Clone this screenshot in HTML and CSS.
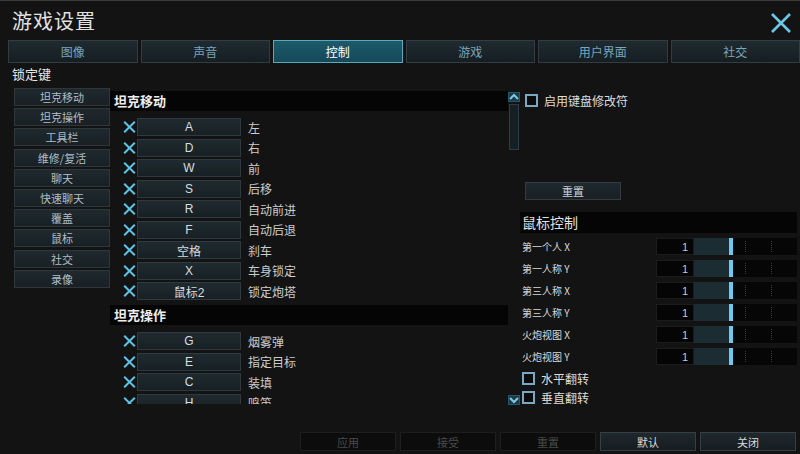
FILE: index.html
```html
<!DOCTYPE html>
<html lang="zh-CN">
<head>
    <meta charset="UTF-8">
    <title>游戏设置</title>
    <link rel="stylesheet" href="styles.css">
</head>
<body>
    <div class="window">
        <header class="titlebar">
            <h1 class="title">游戏设置</h1>
            <svg class="close-icon" width="22" height="22" viewBox="0 0 22 22">
                <path d="M2 2 L20 20 M20 2 L2 20" stroke="#6cc6e6" stroke-width="2.6" fill="none"/>
            </svg>
        </header>

        <nav class="tabs">
            <div class="tab">图像</div>
            <div class="tab">声音</div>
            <div class="tab active">控制</div>
            <div class="tab">游戏</div>
            <div class="tab">用户界面</div>
            <div class="tab">社交</div>
        </nav>

        <div class="section-label">锁定键</div>

        <div class="content">
            <div class="categories">
                <div class="cat-btn">坦克移动</div>
                <div class="cat-btn">坦克操作</div>
                <div class="cat-btn">工具栏</div>
                <div class="cat-btn">维修/复活</div>
                <div class="cat-btn">聊天</div>
                <div class="cat-btn">快速聊天</div>
                <div class="cat-btn">覆盖</div>
                <div class="cat-btn">鼠标</div>
                <div class="cat-btn">社交</div>
                <div class="cat-btn">录像</div>
            </div>

            <div class="binds">
                <div class="group-head">坦克移动</div>
                <div class="bind-list">
                    <div class="bind"><span class="unbind"></span><span class="key">A</span><span class="action">左</span></div>
                    <div class="bind"><span class="unbind"></span><span class="key">D</span><span class="action">右</span></div>
                    <div class="bind"><span class="unbind"></span><span class="key">W</span><span class="action">前</span></div>
                    <div class="bind"><span class="unbind"></span><span class="key">S</span><span class="action">后移</span></div>
                    <div class="bind"><span class="unbind"></span><span class="key">R</span><span class="action">自动前进</span></div>
                    <div class="bind"><span class="unbind"></span><span class="key">F</span><span class="action">自动后退</span></div>
                    <div class="bind"><span class="unbind"></span><span class="key">空格</span><span class="action">刹车</span></div>
                    <div class="bind"><span class="unbind"></span><span class="key">X</span><span class="action">车身锁定</span></div>
                    <div class="bind"><span class="unbind"></span><span class="key">鼠标2</span><span class="action">锁定炮塔</span></div>
                </div>
                <div class="group-head">坦克操作</div>
                <div class="bind-list">
                    <div class="bind"><span class="unbind"></span><span class="key">G</span><span class="action">烟雾弹</span></div>
                    <div class="bind"><span class="unbind"></span><span class="key">E</span><span class="action">指定目标</span></div>
                    <div class="bind"><span class="unbind"></span><span class="key">C</span><span class="action">装填</span></div>
                    <div class="bind"><span class="unbind"></span><span class="key">H</span><span class="action">鸣笛</span></div>
                </div>
            </div>

            <div class="scrollbar">
                <div class="scroll-btn">
                    <svg width="10" height="8" viewBox="0 0 10 8"><path d="M1 6 L5 2 L9 6" stroke="#7cc8e6" stroke-width="2" fill="none"/></svg>
                </div>
                <div class="scroll-thumb"></div>
                <div class="scroll-btn bottom">
                    <svg width="10" height="8" viewBox="0 0 10 8"><path d="M1 2 L5 6 L9 2" stroke="#7cc8e6" stroke-width="2" fill="none"/></svg>
                </div>
            </div>

            <div class="side">
                <label class="check-row">
                    <span class="checkbox"></span>启用键盘修改符
                </label>
                <div class="reset-btn">重置</div>

                <div class="mouse-head">鼠标控制</div>
                <div class="sens-list">
                    <div class="sens-row">
                        <span class="sens-label">第一个人 X</span>
                        <span class="sens-value">1</span>
                        <span class="slider"><span class="fill"></span><span class="handle"></span><span class="tick"></span><span class="tick"></span></span>
                    </div>
                    <div class="sens-row">
                        <span class="sens-label">第一人称 Y</span>
                        <span class="sens-value">1</span>
                        <span class="slider"><span class="fill"></span><span class="handle"></span><span class="tick"></span><span class="tick"></span></span>
                    </div>
                    <div class="sens-row">
                        <span class="sens-label">第三人称 X</span>
                        <span class="sens-value">1</span>
                        <span class="slider"><span class="fill"></span><span class="handle"></span><span class="tick"></span><span class="tick"></span></span>
                    </div>
                    <div class="sens-row">
                        <span class="sens-label">第三人称 Y</span>
                        <span class="sens-value">1</span>
                        <span class="slider"><span class="fill"></span><span class="handle"></span><span class="tick"></span><span class="tick"></span></span>
                    </div>
                    <div class="sens-row">
                        <span class="sens-label">火炮视图 X</span>
                        <span class="sens-value">1</span>
                        <span class="slider"><span class="fill"></span><span class="handle"></span><span class="tick"></span><span class="tick"></span></span>
                    </div>
                    <div class="sens-row">
                        <span class="sens-label">火炮视图 Y</span>
                        <span class="sens-value">1</span>
                        <span class="slider"><span class="fill"></span><span class="handle"></span><span class="tick"></span><span class="tick"></span></span>
                    </div>
                </div>

                <div class="toggles">
                    <label class="check-row"><span class="checkbox"></span>水平翻转</label>
                    <label class="check-row"><span class="checkbox"></span>垂直翻转</label>
                </div>
            </div>
        </div>

        <footer class="footer">
            <div class="foot-btn disabled">应用</div>
            <div class="foot-btn disabled">接受</div>
            <div class="foot-btn disabled">重置</div>
            <div class="foot-btn">默认</div>
            <div class="foot-btn">关闭</div>
        </footer>
    </div>
</body>
</html>
```

FILE: styles.css
```css
* {
    box-sizing: border-box;
}

body {
    margin: 0;
    background-color: #0a0a0a;
    font-family: "Noto Sans CJK SC", "Liberation Sans", sans-serif;
    color: #d8d8d8;
}

.window {
    width: 800px;
    height: 454px;
    background-color: #131313;
    border-top: 1px solid #3a3a3a;
    overflow: hidden;
}

/* Title + close */
.titlebar {
    height: 39px;
    display: flex;
    align-items: center;
    justify-content: space-between;
    padding: 0 8px 0 12px;
}

.title {
    margin: 0;
    font-size: 20px;
    font-weight: normal;
    color: #e2e2e2;
    letter-spacing: 1px;
}

.close-icon {
    margin-top: 4px;
}

/* Tabs */
.tabs {
    display: grid;
    grid-template-columns: repeat(6, 1fr);
    gap: 3px;
    height: 23px;
    padding-left: 8px;
}

.tab {
    display: flex;
    align-items: center;
    justify-content: center;
    font-size: 12px;
    color: #7aa6ba;
    background: linear-gradient(#1f2a30, #161e22);
    border: 1px solid #323c42;
}

.tab.active {
    color: #ffffff;
    background: linear-gradient(#1d5a6a, #15495a);
    border-color: #5aa8bc;
}

.section-label {
    height: 22px;
    line-height: 22px;
    padding-left: 12px;
    font-size: 13px;
    color: #e6e6e6;
}

/* Main area */
.content {
    display: flex;
    height: 325px;
}

.categories {
    width: 96px;
    margin-left: 14px;
    padding-top: 3px;
    display: flex;
    flex-direction: column;
    gap: 2.2px;
}

.cat-btn {
    height: 18px;
    display: flex;
    align-items: center;
    justify-content: center;
    font-size: 11px;
    color: #b0bec6;
    background: linear-gradient(#1f292e, #182024);
    border: 1px solid #2d373c;
}

.binds {
    width: 398px;
    height: 319px;
    padding-top: 6px;
    overflow: hidden;
}

.group-head {
    height: 20px;
    line-height: 20px;
    padding-left: 4px;
    background-color: #050505;
    font-size: 13px;
    font-weight: bold;
    color: #eeeeee;
}

.bind-list {
    display: flex;
    flex-direction: column;
    gap: 2.5px;
    padding: 7px 0 5px 13px;
}

.bind {
    display: flex;
    align-items: center;
    height: 18px;
}

.unbind {
    position: relative;
    width: 12px;
    height: 12px;
    margin-right: 2px;
}

.unbind::before,
.unbind::after {
    content: "";
    position: absolute;
    left: -1px;
    top: 5px;
    width: 15px;
    height: 2px;
    background-color: #5ec2e4;
    transform: rotate(45deg);
}

.unbind::after {
    transform: rotate(-45deg);
}

.key {
    width: 104px;
    height: 18px;
    display: flex;
    align-items: center;
    justify-content: center;
    font-family: "Liberation Sans", "Noto Sans CJK SC", sans-serif;
    font-size: 12px;
    color: #d6dde0;
    background: linear-gradient(#1f2a30, #172024);
    border: 1px solid #2f393e;
}

.action {
    margin-left: 7px;
    font-size: 12px;
    color: #cccccc;
}

/* Scrollbar */
.scrollbar {
    width: 12px;
    margin-top: 7px;
    height: 313px;
    display: flex;
    flex-direction: column;
}

.scroll-btn {
    height: 10px;
    display: flex;
    align-items: center;
    justify-content: center;
    background-color: #1b3a48;
    border: 1px solid #2a5566;
}

.scroll-btn.bottom {
    margin-top: auto;
}

.scroll-thumb {
    height: 46px;
    margin: 2px 1px 0;
    background-color: #161f24;
    border: 1px solid #2b3c46;
}

/* Right column */
.side {
    width: 280px;
    padding-left: 2px;
    display: flex;
    flex-direction: column;
}

.check-row {
    display: flex;
    align-items: center;
    height: 14px;
    margin-top: 8px;
    padding-left: 3px;
    font-size: 12px;
    color: #dddddd;
}

.checkbox {
    width: 13px;
    height: 13px;
    margin-right: 6px;
    border: 2px solid #7aa8c4;
    background-color: #0c0c0c;
}

.reset-btn {
    width: 96px;
    height: 18px;
    margin: 75px 0 0 3px;
    display: flex;
    align-items: center;
    justify-content: center;
    font-size: 11px;
    color: #c8d2d8;
    background: linear-gradient(#1f292e, #182024);
    border: 1px solid #323c42;
}

.mouse-head {
    width: 277px;
    height: 21px;
    margin-top: 12px;
    margin-left: -2px;
    line-height: 21px;
    padding-left: 2px;
    background-color: #050505;
    font-size: 14px;
    color: #e2e2e2;
}

.sens-list {
    display: flex;
    flex-direction: column;
    gap: 5px;
    padding-top: 5px;
    width: 275px;
}

.sens-row {
    display: flex;
    align-items: center;
    height: 17px;
}

.sens-label {
    flex: 1;
    font-size: 10px;
    color: #d8d8d8;
}

.sens-value {
    width: 38px;
    height: 17px;
    padding-right: 5px;
    text-align: right;
    line-height: 17px;
    font-family: "Liberation Sans", sans-serif;
    font-size: 11px;
    color: #c8c8c8;
    background-color: #050505;
    border: 1px solid #1c1c1c;
}

.slider {
    position: relative;
    display: flex;
    width: 103px;
    height: 17px;
    background-color: #060606;
}

.slider .fill {
    width: 35px;
    background-color: #1b2c33;
}

.slider .handle {
    width: 4px;
    background-color: #6ccaf0;
}

.slider .tick {
    position: absolute;
    top: 3px;
    height: 11px;
    border-left: 1px dotted #3a3a3a;
}

.slider .tick:nth-of-type(3) {
    left: 51px;
}

.slider .tick:nth-of-type(4) {
    left: 77px;
}

.toggles {
    display: flex;
    flex-direction: column;
    gap: 5px;
    margin-top: 6px;
}

.toggles .check-row {
    margin-top: 0;
    padding-left: 0;
}

/* Footer buttons */
.footer {
    display: flex;
    gap: 4px;
    padding: 22px 0 0 300px;
}

.foot-btn {
    width: 96px;
    height: 19px;
    display: flex;
    align-items: center;
    justify-content: center;
    font-size: 11px;
    color: #dcdcdc;
    background: linear-gradient(#1f282d, #161d21);
    border: 1px solid #363f45;
}

.foot-btn.disabled {
    color: #4a4a4a;
    background: #0c0c0c;
    border-color: #1e1e1e;
}
```
